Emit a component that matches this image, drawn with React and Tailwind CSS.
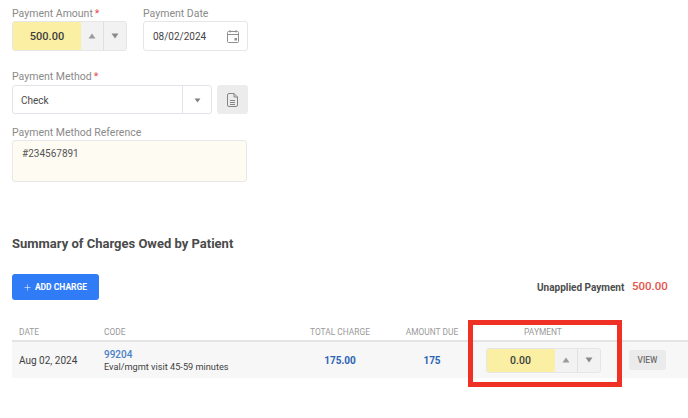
import React from 'react';
import { Plus } from 'lucide-react';

const Label = ({ children, required }) => (
    <div className="h-[14px] text-[10.5px] leading-[14px] text-[#8a8a8a]">
        {children}
        {required && <span className="text-[#e5484d] ml-[2px]">*</span>}
    </div>
);

const Up = () => (
    <svg width="8" height="6" viewBox="0 0 8 6"><path d="M4 0.5 L7.5 5.5 L0.5 5.5 Z" fill="#9a9a9a" /></svg>
);

const Down = ({ color = '#8a8a8a', w = 8, h = 6 }) => (
    <svg width={w} height={h} viewBox="0 0 8 6"><path d="M0.5 0.5 L7.5 0.5 L4 5.5 Z" fill={color} /></svg>
);

const Stepper = ({ value, height, font }) => (
    <div className={`flex w-[115px] ${height} rounded-[3px] border border-[#e6e6e6] bg-[#f2f2f2] overflow-hidden`}>
        <div className={`w-[68px] flex items-center justify-center bg-[#fbefa4] pt-[2px] ${font} font-medium text-[#3d3d3d]`}>
            {value}
        </div>
        <div className="flex-1 flex items-center justify-center border-r border-[#e0e0e0]"><Up /></div>
        <div className="flex-1 flex items-center justify-center"><Down /></div>
    </div>
);

const CalendarIcon = () => (
    <svg width="12" height="13" viewBox="0 0 12 13" fill="none" stroke="#8f8f8f" strokeWidth="1">
        <rect x="0.5" y="1.5" width="11" height="11" rx="1" />
        <path d="M0.5 4.5 H11.5 M3 0 V2.5 M9 0 V2.5" />
        <rect x="7.5" y="8" width="2.5" height="2.5" fill="#8f8f8f" stroke="none" />
    </svg>
);

const FileIcon = () => (
    <svg width="11" height="14" viewBox="0 0 11 14" fill="none" stroke="#858585" strokeWidth="1">
        <path d="M2 0.5 H7 L10.5 4 V12 a1.5 1.5 0 0 1 -1.5 1.5 H2 a1.5 1.5 0 0 1 -1.5 -1.5 V2 a1.5 1.5 0 0 1 1.5 -1.5 Z" />
        <path d="M7 0.5 V4 H10.5 M3 7.5 H8 M3 9.5 H8 M3 11.5 H8" />
    </svg>
);

export default function App() {
    return (
        <div className="relative h-[418px] w-[688px] overflow-hidden bg-white pl-3 pt-[7px] font-['Roboto',sans-serif] text-[#444]">
            {/* Amount + date */}
            <div className="flex gap-[16px]">
                <div className="flex flex-col">
                    <Label required>Payment Amount</Label>
                    <Stepper value="500.00" height="h-[30px]" font="text-[11px]" />
                </div>
                <div className="flex flex-col">
                    <Label>Payment Date</Label>
                    <div className="flex h-[30px] w-[105px] items-center justify-between rounded-[3px] border border-[#e6e6e6] pl-[9px] pr-2 text-[10px] text-[#444]">
                        08/02/2024
                        <CalendarIcon />
                    </div>
                </div>
            </div>

            {/* Method */}
            <div className="mt-[19px] flex flex-col gap-[1px]">
                <Label required>Payment Method</Label>
                <div className="flex gap-[5px]">
                    <div className="flex h-[29px] w-[200px] items-center rounded-[3px] border border-[#e3e4ea]">
                        <div className="flex-1 pl-[8px] pt-[1px] text-[10px] text-[#4a4a4a]">Check</div>
                        <div className="flex h-full w-[29px] items-center justify-center border-l border-[#e3e4ea] pt-[1px]">
                            <Down color="#808080" w={7} h={5} />
                        </div>
                    </div>
                    <div className="flex h-[29px] w-[31px] items-center justify-center rounded-[3px] bg-[#ececec]">
                        <FileIcon />
                    </div>
                </div>
            </div>

            {/* Reference */}
            <div className="mt-[12px] flex flex-col">
                <Label>Payment Method Reference</Label>
                <div className="h-[42px] w-[235px] rounded-[3px] border border-[#e8e8e8] bg-[#fefbf3] pl-[9px] pt-[6px] text-[10px] leading-[14px] text-[#555]">
                    #234567891
                </div>
            </div>

            <h2 className="mt-[52px] h-[20px] text-[13px] font-bold leading-[20px] text-[#4a4a4a]">
                Summary of Charges Owed by Patient
            </h2>

            {/* Button and unapplied */}
            <div className="mt-5 flex items-center">
                <button className="flex h-[26px] w-[87px] items-center justify-center gap-[3px] rounded-[3px] bg-[#2f7cf6] pr-[1px] text-[8.5px] font-bold text-white">
                    <Plus size={9} strokeWidth={1.5} />
                    ADD CHARGE
                </button>
                <div className="ml-[438px] w-[87px] whitespace-nowrap text-[10px] font-bold text-[#4d4d4d]">Unapplied Payment</div>
                <div className="ml-[8px] text-[11.5px] font-medium text-[#e5534b]">500.00</div>
            </div>

            {/* Table */}
            <div className="mt-[25px] grid h-[17px] grid-cols-[92px_196px_80px_104px_118px_1fr] border-b-2 border-[#e4e4e4] text-[8.4px] leading-[14px] text-[#9a9a9a]">
                <div className="pl-[7px]">DATE</div>
                <div>CODE</div>
                <div className="text-center">TOTAL CHARGE</div>
                <div className="text-center">AMOUNT DUE</div>
                <div className="text-center">PAYMENT</div>
                <div />
            </div>
            <div className="grid h-[36px] grid-cols-[92px_196px_80px_104px_118px_1fr] items-center bg-[#f7f7f7] text-[#3f3f3f]">
                <div className="pl-[7px] text-[10px]">Aug 02, 2024</div>
                <div className="pt-[1px]">
                    <div className="text-[10px] font-medium leading-[13px] text-[#4a80c8]">99204</div>
                    <div className="text-[9.2px] leading-[12px]">Eval/mgmt visit 45-59 minutes</div>
                </div>
                <div className="text-center text-[10px] font-bold text-[#2b64b4]">175.00</div>
                <div className="text-center text-[10px] font-bold text-[#2b64b4]">175</div>
                <div className="flex justify-center">
                    <Stepper value="0.00" height="h-[25px]" font="text-[10.5px]" />
                </div>
                <div className="pl-[27px]">
                    <div className="flex h-[20px] w-[37px] items-center justify-center rounded-[2px] bg-[#ebebeb] text-[8.4px] font-medium text-[#707070]">
                        VIEW
                    </div>
                </div>
            </div>

            {/* red highlight drawn over the screenshot */}
            <div className="absolute left-[468px] top-[320px] h-[67px] w-[154px] border-[5px] border-[#ee3124]" />
        </div>
    );
}
